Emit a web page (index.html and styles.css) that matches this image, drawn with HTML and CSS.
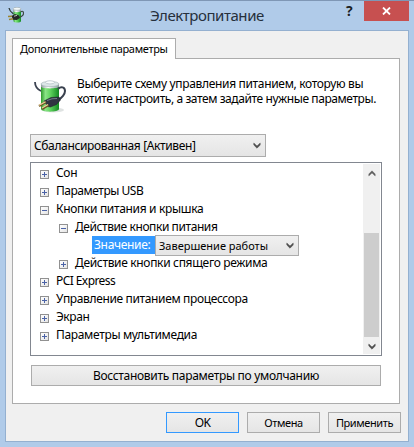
FILE: index.html
```
<!DOCTYPE html>
<html lang="ru">
<head>
<meta charset="utf-8">
<title>Электропитание</title>
<link rel="stylesheet" href="styles.css">
</head>
<body>
<svg class="defs" width="0" height="0">
  <defs>
    <linearGradient id="green" x1="0" x2="1" y1="0" y2="0">
      <stop offset="0" stop-color="#2e9a2c"/><stop offset=".25" stop-color="#8ae486"/>
      <stop offset=".5" stop-color="#62d560"/><stop offset="1" stop-color="#128a22"/>
    </linearGradient>
    <linearGradient id="metal" x1="0" x2="1" y1="0" y2="0">
      <stop offset="0" stop-color="#8e9a9e"/><stop offset=".4" stop-color="#fff"/><stop offset="1" stop-color="#86989c"/>
    </linearGradient>
    <symbol id="battery" viewBox="0 0 32 34">
      <ellipse cx="19" cy="30" rx="11" ry="2.5" fill="#dfe3e2"/>
      <path d="M1 2c0 5 2 7 6 9" fill="none" stroke="#3c4352" stroke-width="1.800"/>
      <path d="M7 4v25c0 3.500 18 3.500 18 0V4z" fill="url(#green)"/>
      <path d="M7 4v2.500c0 2.500 18 2.500 18 0V4z" fill="url(#metal)"/>
      <ellipse cx="16" cy="4" rx="9" ry="2.600" fill="#dce6e7" stroke="#a0b0b4" stroke-width=".6"/>
      <ellipse cx="16" cy="2.300" rx="4.500" ry="1.600" fill="#f8fbfb" stroke="#a6b4bc" stroke-width=".6"/>
      <path d="M24 20c4-2 7-6 7-9 0-4-4-5-7-2" fill="none" stroke="#39404e" stroke-width="2"/>
      <path d="M10 21l7-3.500 8-.5 1.500 3-4 4.500-6 2.500-3-.5z" fill="#303542" stroke="#191d27" stroke-width=".5"/>
      <path d="M13 20.500l5-1.700 5-.3" fill="none" stroke="#747c8a" stroke-width="1"/>
      <path d="M12 22l-7 4M14.500 25l-6.500 4" stroke="#6e5526" stroke-width="2.200"/>
      <path d="M11.500 21.700l-6.500 3.600M14 24.500l-6 3.600" stroke="#efd29a" stroke-width="1.200"/>
    </symbol>
    <symbol id="down" viewBox="0 0 8 7"><path d="M.8 1v2L4 6.200 7.200 3V1L4 4z" fill="#505050" stroke="#505050" stroke-width=".5"/></symbol>
    <symbol id="up" viewBox="0 0 8 7"><path d="M.8 6V4L4 .8 7.200 4v2L4 3z" fill="#606060" stroke="#606060" stroke-width=".4"/></symbol>
  </defs>
</svg>
<div class="window">
  <header class="titlebar">
    <svg class="app-icon" viewBox="0 0 16 16">
      <path d="M1 1c.5 3 2 4 4.500 6" fill="none" stroke="#2c3836" stroke-width="1.300"/>
      <path d="M5.500 2v12c0 2 7.500 2 7.500 0V2z" fill="url(#green)"/>
      <path d="M5 2v2c0 1.500 8 1.500 8 0V2z" fill="url(#metal)"/>
      <ellipse cx="9" cy="1.800" rx="3.800" ry="1.500" fill="#f2f8f8" stroke="#8f9d9f" stroke-width=".5"/>
      <path d="M11 10.500c4-1 5-3.500 4.300-5.500-.5-1-1.800-1-2.300 0" fill="none" stroke="#3d4a46" stroke-width="1.200"/>
      <path d="M3.500 9L7 7l4 1.500.8 2.500-3 2-3.800-.2z" fill="#252825"/>
      <path d="M0 9.500l4-.2M1 12.500l4-.7" stroke="#9a8430" stroke-width="1.400"/>
      <path d="M6 9.200l3-.8" stroke="#bbb" stroke-width="1"/>
    </svg>
    <h1 class="title">Электропитание</h1>
    <span class="help">?</span>
    <span class="close"><svg width="9" height="8" viewBox="0 0 9 8"><path d="M1 .5l7 7M8 .5l-7 7" stroke="#fff" stroke-width="1.800"/></svg></span>
  </header>
  <main class="client">
    <div class="tab"><span class="tab-label">Дополнительные параметры</span></div>
    <section class="page">
      <div class="intro">
        <svg class="intro-icon"><use href="#battery"/></svg>
        <p class="intro-text"><span class="line1">Выберите схему управления питанием, которую вы</span><br><span class="line2">хотите настроить, а затем задайте нужные параметры.</span></p>
      </div>
      <div class="combo scheme"><span>Сбалансированная [Активен]</span><svg class="chev"><use href="#down"/></svg></div>
      <div class="list">
        <ul class="tree">
          <li><i class="box plus"></i><span>Сон</span></li>
          <li><i class="box plus"></i><span class="usb">Параметры USB</span></li>
          <li><i class="box"></i><span>Кнопки питания и крышка</span></li>
          <li class="sub"><i class="box"></i><span class="tight">Действие кнопки питания</span></li>
          <li class="value"><span class="selected">Значение:</span><div class="combo action"><span>Завершение работы</span><svg class="chev"><use href="#down"/></svg></div></li>
          <li class="sub"><i class="box plus"></i><span>Действие кнопки спящего режима</span></li>
          <li><i class="box plus"></i><span class="pci">PCI Express</span></li>
          <li><i class="box plus"></i><span class="cpu">Управление питанием процессора</span></li>
          <li><i class="box plus"></i><span class="tight">Экран</span></li>
          <li><i class="box plus"></i><span>Параметры мультимедиа</span></li>
        </ul>
        <div class="scrollbar"><svg class="chev arrow-up"><use href="#up"/></svg><div class="thumb"></div><svg class="chev arrow-down"><use href="#down"/></svg></div>
      </div>
      <div class="button reset">Восстановить параметры по умолчанию</div>
    </section>
    <footer class="footer">
      <div class="button ok">OK</div>
      <div class="button">Отмена</div>
      <div class="button">Применить</div>
    </footer>
  </main>
</div>
</body>
</html>
```
FILE: styles.css
```
* { box-sizing: border-box; }
body { margin: 0; font: 12px/15px "Noto Sans", "Open Sans", sans-serif; color: #000; letter-spacing: -.33px; white-space: nowrap; }
svg { display: block; }
.defs { position: absolute; }
.window { width: 414px; height: 447px; padding: 0 5px 5px; background: #b0cbe9; border-top: 1px solid #7f97b5; overflow: hidden; }
.titlebar { height: 29px; display: flex; align-items: flex-start; }
.app-icon { width: 16px; height: 16px; margin: 6px 0 0 3px; }
.title { width: 114px; margin: 3px 0 0 126px; font-size: 15px; font-weight: 400; line-height: 22px; letter-spacing: -.45px; color: #26303c; }
.help { margin: 0 0 0 82px; width: 18px; font: bold 14px/20px "Open Sans", sans-serif; color: #1b1f25; }
.close { width: 45px; height: 20px; background: #c75050; display: flex; align-items: center; justify-content: center; }
.client { height: 412px; background: #f0f0f0; border: 1px solid #94b0d0; width: 404px; padding: 7px 8px 0 6px; }
.tab { width: 164px; height: 21px; background: #fff; border: 1px solid #acacac; border-bottom: 0; padding: 2px 0 0 7px; font-size: 11px; position: relative; z-index: 1; }
.page { margin-top: -1px; width: 388px; height: 346px; background: #fff; border: 1px solid #acacac; padding: 17px 0 0 17px; }
.intro { display: flex; height: 58px; }
.intro-icon { width: 32px; height: 34px; margin: 4px 0 0 4px; }
.intro-text { margin: 0 0 0 11px; line-height: 15px; }
.line2 { letter-spacing: -.42px; }
.combo { display: flex; align-items: center; justify-content: space-between; border: 1px solid #acacac; background: linear-gradient(#f0f0f0, #e5e5e5); }
.scheme { width: 236px; height: 23px; padding: 0 4px 0 3px; letter-spacing: -.36px; }
.chev { width: 8px; height: 7px; flex: none; }
.list { margin-top: 5px; width: 352px; height: 194px; border: 1px solid #828790; padding: 1px; display: flex; justify-content: space-between; }
.tree { list-style: none; margin: 0; padding: 0 0 0 8px; }
.tree li { height: 18px; display: flex; align-items: center; }
.tree li > span { line-height: 18px; }
.tree .sub { padding-left: 19px; }
.box { width: 9px; height: 9px; margin: 2px 7px 0 0; border: 1px solid #919191; background: linear-gradient(#4b63a7, #4b63a7) center / 5px 1px no-repeat, linear-gradient(135deg, #fff, #e4e4e4); }
.plus { background: linear-gradient(#4b63a7, #4b63a7) center / 5px 1px no-repeat, linear-gradient(#4b63a7, #4b63a7) center / 1px 5px no-repeat, linear-gradient(135deg, #fff, #e4e4e4); }
.usb { letter-spacing: -.47px; }
.tight { letter-spacing: -.42px; }
.pci { letter-spacing: -.57px; }
.cpu { letter-spacing: -.36px; }
.tree .value { padding-left: 52px; }
.selected { width: 63px; height: 18px; padding-left: 2px; background: #3399ff; color: #fff; }
.action { width: 144px; height: 21px; padding: 0 4px 0 3px; font-size: 11px; letter-spacing: 0; margin: -1px 0 -2px; z-index: 1; }
.scrollbar { width: 17px; background: #f0f0f0; display: flex; flex-direction: column; align-items: center; padding-top: 6px; }
.thumb { width: 15px; height: 104px; margin: 56px 0 6px; background: #cdcdcd; }
.button { display: flex; align-items: center; justify-content: center; height: 21px; border: 1px solid #acacac; background: linear-gradient(#f0f0f0, #e5e5e5); }
.reset { width: 350px; margin: 9px 0 0 1px; letter-spacing: -.3px; }
.footer { display: flex; justify-content: flex-end; gap: 8px; margin: 8px -1px 0 0; font-size: 11px; letter-spacing: -.4px; }
.footer .button { width: 73px; }
.footer .ok { border-color: #3399ff; font-size: 12px; letter-spacing: -.7px; }
```
